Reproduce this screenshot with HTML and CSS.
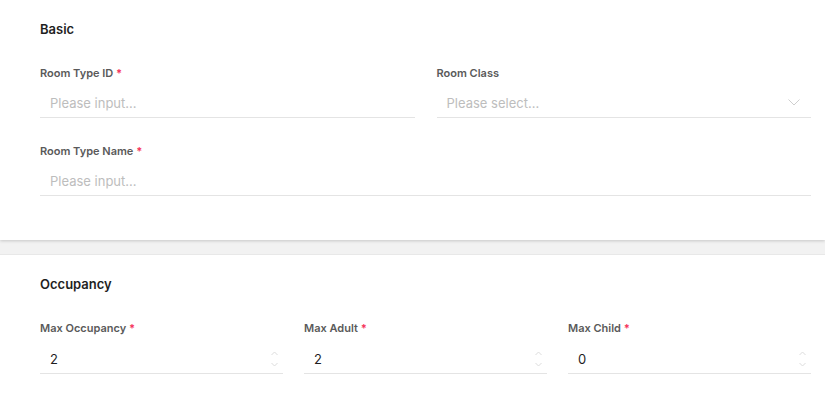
FILE: index.html
```html
<!DOCTYPE html>
<html>
<head>
<meta charset="utf-8">
<link rel="stylesheet" href="styles.css">
</head>
<body>
<section class="card card-basic">
  <h2 class="card-title">Basic</h2>
  <div class="grid grid-2">
    <div class="field">
      <label class="label">Room Type ID <span class="req">*</span></label>
      <div class="control"><input class="input" placeholder="Please input..."></div>
    </div>
    <div class="field">
      <label class="label">Room Class</label>
      <div class="control select">
        <span class="placeholder">Please select...</span>
        <svg class="chev" width="12" height="7" viewBox="0 0 12 7"><path d="M0.5 0.5 L6 6 L11.5 0.5" fill="none" stroke="#cfcfcf" stroke-width="1"/></svg>
      </div>
    </div>
    <div class="field full">
      <label class="label">Room Type Name <span class="req">*</span></label>
      <div class="control"><input class="input" placeholder="Please input..."></div>
    </div>
  </div>
</section>
<div class="band"></div>
<section class="card">
  <h2 class="card-title">Occupancy</h2>
  <div class="grid grid-3">
    <div class="field">
      <label class="label">Max Occupancy <span class="req">*</span></label>
      <div class="control number"><span class="value">2</span><span class="spin"><svg width="7" height="16" viewBox="0 0 7 16"><path d="M0.5 4 L3.5 1 L6.5 4 M0.5 12 L3.5 15 L6.5 12" fill="none" stroke="#dcdcdc" stroke-width="1"/></svg></span></div>
    </div>
    <div class="field">
      <label class="label">Max Adult <span class="req">*</span></label>
      <div class="control number"><span class="value">2</span><span class="spin"><svg width="7" height="16" viewBox="0 0 7 16"><path d="M0.5 4 L3.5 1 L6.5 4 M0.5 12 L3.5 15 L6.5 12" fill="none" stroke="#dcdcdc" stroke-width="1"/></svg></span></div>
    </div>
    <div class="field">
      <label class="label">Max Child <span class="req">*</span></label>
      <div class="control number"><span class="value">0</span><span class="spin"><svg width="7" height="16" viewBox="0 0 7 16"><path d="M0.5 4 L3.5 1 L6.5 4 M0.5 12 L3.5 15 L6.5 12" fill="none" stroke="#dcdcdc" stroke-width="1"/></svg></span></div>
    </div>
  </div>
</section>
</body>
</html>
```
FILE: styles.css
```css
* { box-sizing: border-box; }
html, body { margin: 0; padding: 0; background: #fff; }
body { font-family: Inter, "Noto Sans", sans-serif; color: #1f1f1f; }
.card {
  padding: 20px 14px 0 40px;
  background: #fff;
  position: relative;
}
.card-basic { height: 240px; box-shadow: 0 1px 3px rgba(0,0,0,0.18); z-index: 1; }
.card-title {
  margin: 0;
  font-size: 13px;
  line-height: 18px;
  font-weight: 600;
  color: #1f1f1f;
}
.band { height: 15px; background: #f2f2f2; border-bottom: 1px solid #e8e8e8; }
.grid { display: grid; margin-top: 26px; row-gap: 24px; }
.grid-2 { grid-template-columns: 1fr 1fr; column-gap: 22px; }
.grid-3 { grid-template-columns: 1fr 1fr 1fr; column-gap: 21px; }
.field.full { grid-column: 1 / -1; }
.label {
  display: block;
  font-size: 11px;
  line-height: 18px;
  font-weight: 600;
  color: #5a5a5a;
}
.req { color: #f5365c; font-weight: 700; }
.control {
  margin-top: 6px;
  height: 30px;
  border-bottom: 1px solid #e4e4e4;
  display: flex;
  align-items: center;
  padding: 0 10px;
}
.input {
  border: 0; outline: 0; padding: 0; margin: 0;
  width: 100%;
  font-family: inherit;
  font-size: 13px;
  color: #1f1f1f;
  background: transparent;
}
.input::placeholder, .placeholder { color: #bdbdbd; }
.placeholder { font-size: 13px; flex: 1; }
.chev { margin-right: 1px; }
.number { justify-content: space-between; padding-right: 5px; margin-top: 7px; }
.value { font-size: 13px; color: #1f1f1f; }
.spin { display: flex; }
```
